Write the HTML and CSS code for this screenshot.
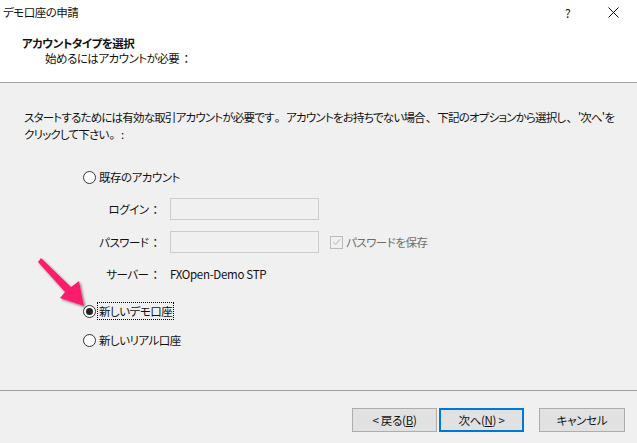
FILE: index.html
```html
<!DOCTYPE html>
<html lang="ja">
<head>
<meta charset="utf-8">
<link rel="stylesheet" href="styles.css">
</head>
<body>
<div class="window">
  <header class="header">
    <div class="titlebar">
      <span class="title">デモ口座の申請</span>
      <div class="controls">
        <span class="ctl help">?</span>
        <span class="ctl close"><svg width="11" height="11" viewBox="0 0 11 11"><path d="M0.5 0.5 L10.5 10.5 M10.5 0.5 L0.5 10.5" stroke="#111" stroke-width="1" fill="none"/></svg></span>
      </div>
    </div>
    <div class="heading">アカウントタイプを選択</div>
    <div class="subheading">始めるにはアカウントが必要<span class="fw">：</span></div>
  </header>

  <main class="main">
    <p class="desc">スタートするためには有効な取引アカウントが必要です<span class="fw">。</span>アカウントをお持ちでない場合<span class="fw">、</span>下記のオプションから選択し<span class="fw">、</span>'次へ'をクリックして下さい<span class="fw">。</span>:</p>

    <div class="options">
      <div class="row radio-row r1">
        <span class="radio"></span><span class="rlabel">既存のアカウント</span>
      </div>
      <div class="row field-row f1">
        <span class="flabel">ログイン<span class="fw">：</span></span>
        <span class="input"></span>
      </div>
      <div class="row field-row f2">
        <span class="flabel">パスワード<span class="fw">：</span></span>
        <span class="input"></span>
        <span class="check"><svg width="12" height="12" viewBox="0 0 12 12"><path d="M2.5 6.2 L5 8.6 L9.8 3.2" stroke="#a8a8a8" stroke-width="1" fill="none"/></svg></span>
        <span class="clabel">パスワードを保存</span>
      </div>
      <div class="row field-row f3">
        <span class="flabel">サーバー<span class="fw">：</span></span>
        <span class="server">FXOpen-Demo STP</span>
      </div>
      <div class="row radio-row r2">
        <span class="radio checked"></span><span class="rlabel focus">新しいデモ口座</span>
      </div>
      <div class="row radio-row r3">
        <span class="radio"></span><span class="rlabel">新しいリアル口座</span>
      </div>
    </div>
  </main>

  <footer class="footer">
    <button class="btn back">&lt;&nbsp;戻る(<u>B</u>)</button>
    <button class="btn next">次へ(<u>N</u>)&nbsp;&gt;</button>
    <button class="btn cancel">キャンセル</button>
  </footer>

  <svg class="arrow" width="637" height="443" viewBox="0 0 637 443">
    <defs>
      <filter id="sh" x="-20%" y="-20%" width="140%" height="140%">
        <feDropShadow dx="1.5" dy="1.5" stdDeviation="1.2" flood-color="#000" flood-opacity="0.45"/>
      </filter>
    </defs>
    <polygon points="41,258 38,262 65,292 60,298 84,306 79,281 71,287" fill="#fc1f6c" filter="url(#sh)"/>
  </svg>
</div>
</body>
</html>
```

FILE: styles.css
```css
* { box-sizing: border-box; }
html, body { margin: 0; padding: 0; }
body {
  width: 637px;
  height: 443px;
  overflow: hidden;
  background: #f0f0f0;
  font-family: "Noto Sans CJK JP", "Noto Sans", sans-serif;
  font-size: 11.5px;
  letter-spacing: -0.5px;
  font-feature-settings: "palt";
  color: #111;
}
.fw {
  font-feature-settings: normal;
  letter-spacing: 0;
  margin-left: 1px;
}
.window {
  position: relative;
  width: 637px;
  height: 443px;
}
.header {
  height: 83px;
  background: #fff;
  border-bottom: 1px solid #a0a0a0;
}
.titlebar {
  height: 25px;
  display: flex;
  align-items: center;
  justify-content: space-between;
}
.title {
  padding-left: 3px;
  line-height: 25px;
}
.controls {
  display: flex;
  padding-right: 1px;
}
.ctl {
  width: 45px;
  height: 25px;
  display: flex;
  align-items: center;
  justify-content: center;
}
.help { font-size: 12px; padding-right: 2px; }
.heading {
  margin-top: 11px;
  padding-left: 22px;
  line-height: 15px;
  font-weight: bold;
}
.subheading {
  padding-left: 45px;
  line-height: 15px;
}
.main {
  height: 307px;
  padding: 26px 22px 0 24px;
}
.desc {
  margin: 0;
  line-height: 17px;
  letter-spacing: -0.8px;
}
.desc .fw { letter-spacing: 0; }
.options {
  margin-top: 24px;
  padding-left: 59px;
  display: flex;
  flex-direction: column;
}
.row {
  display: flex;
  align-items: center;
}
.radio-row { height: 20px; }
.field-row { height: 22px; }
.f1 { margin-top: 11px; }
.f2 { margin-top: 11px; }
.f3 { margin-top: 10px; }
.r2 { margin-top: 16px; }
.r3 { margin-top: 9px; }
.radio {
  width: 13px;
  height: 13px;
  border: 1px solid #333;
  border-radius: 50%;
  background: #fff;
  display: flex;
  align-items: center;
  justify-content: center;
  flex: none;
}
.radio.checked::after {
  content: "";
  width: 7px;
  height: 7px;
  border-radius: 50%;
  background: #222;
}
.rlabel {
  margin-left: 2px;
  padding: 0 1px;
  line-height: 16px;
}
.rlabel.focus {
  outline: 1px dotted #000;
  outline-offset: 0;
}
.flabel {
  width: 78px;
  text-align: right;
}
.input {
  margin-left: 9px;
  width: 149px;
  height: 22px;
  border: 1px solid #cccccc;
  background: #f0f0f0;
}
.check {
  margin-left: 11px;
  width: 13px;
  height: 13px;
  border: 1px solid #bcbcbc;
  background: #f0f0f0;
  display: flex;
  align-items: center;
  justify-content: center;
}
.clabel {
  margin-left: 3px;
  color: #6d6d6d;
}
.server {
  margin-left: 9px;
  letter-spacing: -0.3px;
}
.footer {
  height: 53px;
  border-top: 1px solid #a0a0a0;
  display: flex;
  justify-content: flex-end;
  align-items: flex-start;
  padding: 17px 12px 0 0;
}
.btn {
  font: inherit;
  letter-spacing: -0.3px;
  font-feature-settings: "palt";
  color: #111;
  height: 24px;
  width: 85px;
  padding: 0;
  background: #e1e1e1;
  border: 1px solid #adadad;
  border-radius: 0;
  line-height: 20px;
}
.btn u { text-underline-offset: 1px; }
.next {
  margin-left: 2px;
  border: 2px solid #0078d7;
}
.cancel {
  margin-left: 15px;
  width: 86px;
}
.arrow {
  position: absolute;
  left: 0;
  top: 0;
  pointer-events: none;
}
```
